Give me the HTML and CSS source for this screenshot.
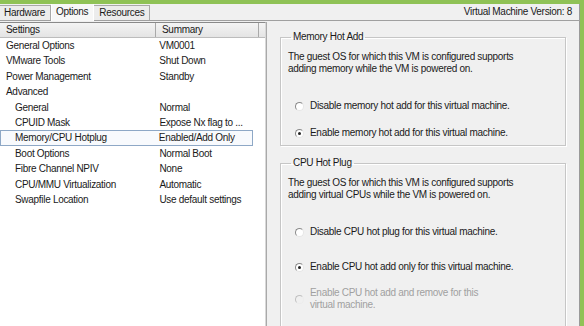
FILE: index.html
```html
<!DOCTYPE html>
<html lang="en">
<head>
  <meta charset="UTF-8">
  <title>Virtual Machine Properties</title>
  <link rel="stylesheet" href="styles.css">
</head>
<body>
  <div class="vm-window">
    <div class="vm-tabbar">
      <div class="vm-tab">Hardware</div>
      <div class="vm-tab vm-tab-active">Options</div>
      <div class="vm-tab">Resources</div>
      <div class="vm-version">Virtual Machine Version: 8</div>
    </div>

    <div class="vm-body">
      <div class="settings-list">
        <div class="settings-head">
          <div class="col-name">Settings</div>
          <div class="col-summary">Summary</div>
          <div class="col-extra"></div>
        </div>
        <div class="settings-row"><div class="col-name">General Options</div><div class="col-summary">VM0001</div></div>
        <div class="settings-row"><div class="col-name">VMware Tools</div><div class="col-summary">Shut Down</div></div>
        <div class="settings-row"><div class="col-name">Power Management</div><div class="col-summary">Standby</div></div>
        <div class="settings-row"><div class="col-name">Advanced</div><div class="col-summary"></div></div>
        <div class="settings-row child"><div class="col-name">General</div><div class="col-summary">Normal</div></div>
        <div class="settings-row child"><div class="col-name">CPUID Mask</div><div class="col-summary">Expose Nx flag to ...</div></div>
        <div class="settings-row child selected"><div class="col-name">Memory/CPU Hotplug</div><div class="col-summary">Enabled/Add Only</div></div>
        <div class="settings-row child"><div class="col-name">Boot Options</div><div class="col-summary">Normal Boot</div></div>
        <div class="settings-row child"><div class="col-name">Fibre Channel NPIV</div><div class="col-summary">None</div></div>
        <div class="settings-row child"><div class="col-name">CPU/MMU Virtualization</div><div class="col-summary">Automatic</div></div>
        <div class="settings-row child"><div class="col-name">Swapfile Location</div><div class="col-summary">Use default settings</div></div>
      </div>

      <div class="detail-pane">
        <fieldset class="group group-memory">
          <legend>Memory Hot Add</legend>
          <p class="group-text">The guest OS for which this VM is configured supports adding memory while the VM is powered on.</p>
          <label class="radio first-radio"><span class="radio-dot"></span>Disable memory hot add for this virtual machine.</label>
          <label class="radio gap-mem"><span class="radio-dot checked"></span>Enable memory hot add for this virtual machine.</label>
        </fieldset>

        <fieldset class="group group-cpu">
          <legend>CPU Hot Plug</legend>
          <p class="group-text">The guest OS for which this VM is configured supports adding virtual CPUs while the VM is powered on.</p>
          <label class="radio first-radio"><span class="radio-dot"></span>Disable CPU hot plug for this virtual machine.</label>
          <label class="radio gap-cpu"><span class="radio-dot checked"></span>Enable CPU hot add only for this virtual machine.</label>
          <label class="radio gap-cpu2 disabled"><span class="radio-dot"></span><span>Enable CPU hot add and remove for this virtual machine.</span></label>
        </fieldset>
      </div>
    </div>
  </div>
</body>
</html>
```

FILE: styles.css
```css
body {
  margin: 0;
  width: 584px;
  height: 326px;
  overflow: hidden;
  background: #f0f0f0;
  font-family: "Liberation Sans", Arial, sans-serif;
  font-size: 10px;
  letter-spacing: -0.3px;
  color: #1a1a1a;
}

.vm-window {
  height: 322px;
  overflow: hidden;
  border-top: 4px solid #8fc256;
  border-right: 4px solid #8fc256;
  box-shadow: inset -1px 0 0 #9a9a9a;
}

/* Tabs */
.vm-tabbar {
  display: flex;
  align-items: flex-end;
  height: 16px;
  border-bottom: 1px solid #a0a0a0;
  padding-right: 8px;
}

.vm-tab {
  height: 14px;
  line-height: 14px;
  padding: 0 5px;
  border: 1px solid #a8a8a8;
  border-bottom: none;
  border-left: none;
  background: #ececec;
}

.vm-tab:first-child {
  padding-left: 4px;
}

.vm-tab-active {
  height: 17px;
  line-height: 16px;
  background: #f7f7f7;
  border-left: 1px solid #d0d0d0;
  border-color: #ffffff;
  margin-bottom: -1px;
  padding: 0 5px 0 4px;
}

.vm-version {
  margin-left: auto;
  line-height: 14px;
  padding-bottom: 1px;
}

/* Body */
.vm-body {
  display: flex;
  height: 305px;
  padding-top: 1px;
}

.settings-list {
  width: 265px;
  background: #ffffff;
  border-top: 1px solid #8a8a8a;
  border-right: 1px solid #d8d8d8;
  box-shadow: 1px 0 0 #a9a9a9;
}

.settings-head {
  display: flex;
  height: 14px;
  line-height: 13px;
  background: linear-gradient(#f4f4f4, #e4e4e4);
  border-bottom: 1px solid #bcbcbc;
}

.settings-head .col-name,
.settings-head .col-summary {
  border-right: 1px solid #a9a9a9;
}

.col-name {
  width: 149px;
  padding-left: 6px;
}

.col-summary {
  width: 96px;
  padding-left: 6px;
}

.col-extra {
  flex: 1;
}

.settings-row {
  display: flex;
  height: 15.4px;
  line-height: 15.4px;
  margin-right: 12px;
  box-sizing: border-box;
}

.settings-row .col-summary {
  padding-left: 8px;
}

.settings-row.child .col-name {
  padding-left: 15px;
  width: 140px;
}

.settings-row.selected {
  border: 1px solid #8ea8c6;
  background: #f8fafd;
  line-height: 13.4px;
}

.settings-row.selected .col-name {
  padding-left: 14px;
}

/* Right pane */
.detail-pane {
  flex: 1;
  padding: 9px 14px 0 14px;
}

.group {
  margin: 0;
  padding: 0 7px;
  border: 1px solid #c6c6c6;
  box-shadow: inset 1px 1px 0 #ffffff, 1px 1px 0 #ffffff;
}

.group legend {
  padding: 0 2px;
  margin-left: 3px;
  line-height: 12px;
}

.group-memory {
  height: 113px;
}

.group-cpu {
  margin-top: 11px;
  height: 200px;
}

.group-text {
  margin: 8px 0 0 0;
  line-height: 12px;
  width: 235px;
}

.radio {
  display: flex;
  align-items: flex-start;
  line-height: 12px;
  padding-left: 7px;
}

.first-radio {
  margin-top: 25px;
}

.gap-mem {
  margin-top: 15px;
}

.gap-cpu {
  margin-top: 23px;
}

.gap-cpu2 {
  margin-top: 14px;
}

.radio.disabled {
  color: #a0a0a0;
  width: 210px;
  align-items: center;
}

.radio-dot {
  flex: none;
  width: 7px;
  height: 7px;
  margin: 2px 6px 0 0;
  border-radius: 50%;
  border: 1px solid #8a8a8a;
  border-right-color: #e6e6e6;
  border-bottom-color: #e6e6e6;
  background: #ffffff;
  position: relative;
}

.radio.disabled .radio-dot {
  border-color: #c0c0c0;
  border-right-color: #ececec;
  border-bottom-color: #ececec;
  background: #f0f0f0;
  margin-top: 0;
}

.radio-dot.checked::after {
  content: "";
  position: absolute;
  left: 2px;
  top: 2px;
  width: 3px;
  height: 3px;
  border-radius: 50%;
  background: #222222;
}
```
